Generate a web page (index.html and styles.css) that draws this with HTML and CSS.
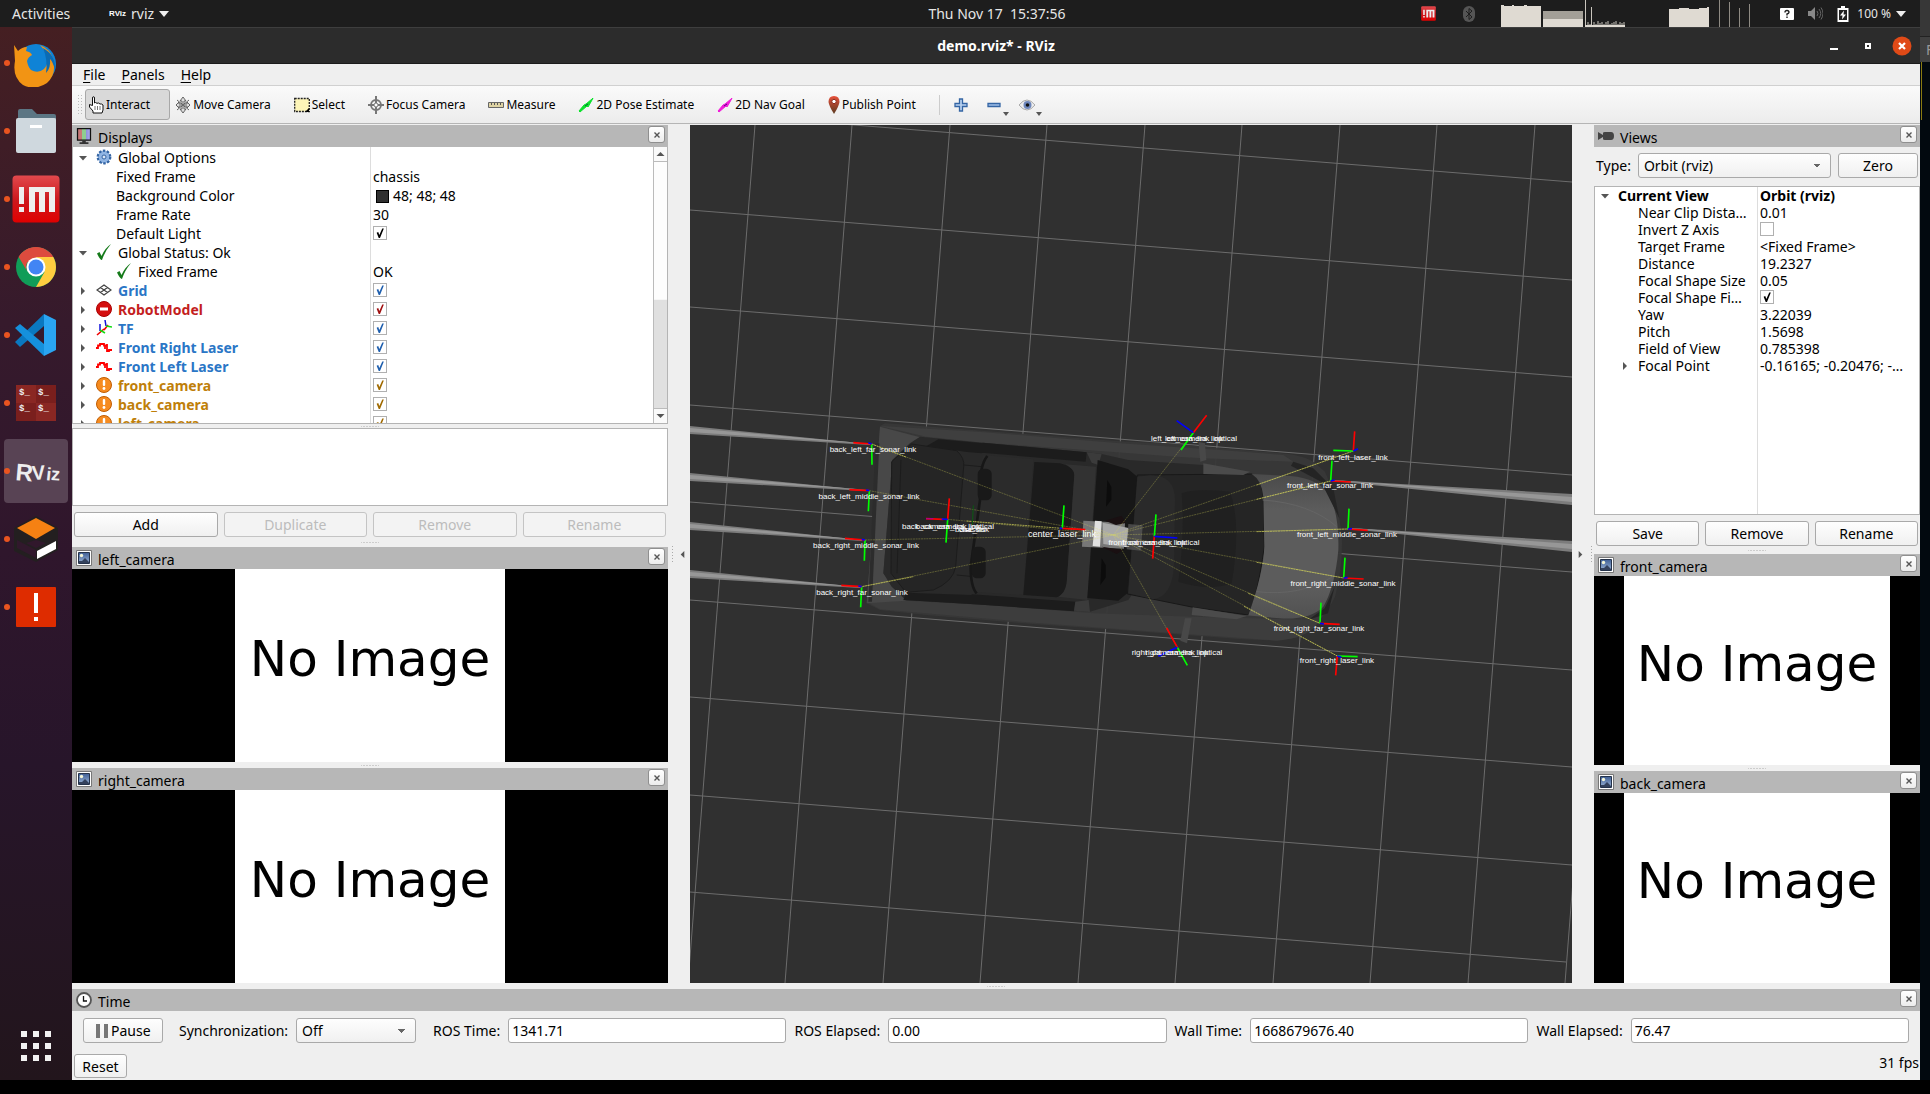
FILE: index.html
```html
<!DOCTYPE html>
<html lang="en">
<head>
<meta charset="utf-8">
<title>demo.rviz* - RViz</title>
<link rel="stylesheet" href="styles.css">
</head>
<body>
<svg class="defs" aria-hidden="true">
  <defs>
    <linearGradient id="gSky" x1="0" y1="0" x2="0" y2="1"><stop offset="0" stop-color="#3f5f95"/><stop offset="1" stop-color="#9db6d8"/></linearGradient>
    <linearGradient id="gM" x1="0" y1="0" x2="0" y2="1"><stop offset="0" stop-color="#e2494d"/><stop offset=".5" stop-color="#cc1a1f"/><stop offset="1" stop-color="#e00000"/></linearGradient>
    <linearGradient id="gMon" x1="0" y1="0" x2="1" y2="0"><stop offset="0" stop-color="#c87878"/><stop offset=".33" stop-color="#c87878"/><stop offset=".34" stop-color="#8fce8f"/><stop offset=".66" stop-color="#8fce8f"/><stop offset=".67" stop-color="#9090dc"/><stop offset="1" stop-color="#b0b0f0"/></linearGradient>
    <linearGradient id="gPin" x1="0" y1="0" x2="0" y2="1"><stop offset="0" stop-color="#e8503a"/><stop offset="1" stop-color="#5a3a20"/></linearGradient>
    <linearGradient id="gHood" x1="0" y1="0" x2="0" y2="1"><stop offset="0" stop-color="#4a4a4a"/><stop offset=".25" stop-color="#5c5c5c"/><stop offset=".8" stop-color="#5c5c5c"/><stop offset="1" stop-color="#515151"/></linearGradient>
    <symbol id="i-open" viewBox="0 0 10 10"><path d="M1 3h8L5 7.500z" fill="#555"/></symbol>
    <symbol id="i-shut" viewBox="0 0 10 10"><path d="M3 1v8l4-4z" fill="#555"/></symbol>
    <symbol id="i-tick" viewBox="0 0 16 16"><path d="M1 9.500l2.500-1.500 2 4Q9 4 15 0 9 7 6 16 4 16 1 9.500z" fill="#157a1a"/></symbol>
    <symbol id="i-gear" viewBox="0 0 16 16"><circle cx="8" cy="8" r="6.200" fill="#8fb4e3" stroke="#3465a4" stroke-width="2.400" stroke-dasharray="2.500 1.400"/><circle cx="8" cy="8" r="5.200" fill="#8fb4e3"/><circle cx="8" cy="8" r="2" fill="#dce8f7" stroke="#3465a4"/></symbol>
    <symbol id="i-grid" viewBox="0 0 16 16"><path d="M8 3l7 5-7 5-7-5zM4.500 5.500l7 5M11.500 5.500l-7 5" fill="none" stroke="#444" stroke-width="1.300"/></symbol>
    <symbol id="i-err" viewBox="0 0 16 16"><circle cx="8" cy="8" r="7.500" fill="#d40f0f" stroke="#a00" /><rect x="4" y="6.500" width="8" height="3" fill="#fff"/></symbol>
    <symbol id="i-tf" viewBox="0 0 16 16"><path d="M1 15l7-6M8 10l4-5" stroke="#e00" stroke-width="1.600"/><path d="M4 11V4M10 6L9 0" stroke="#11d" stroke-width="1.500"/><path d="M4 10l5 3M10 6l6 1" stroke="#1d1" stroke-width="1.500"/></symbol>
    <symbol id="i-laser" viewBox="0 0 16 16"><path d="M0 9h2V6.500h2V5h4v1.500h1V10M11 5v7h2v-1h3M9 6.500h2" fill="none" stroke="#f00" stroke-width="1.800"/></symbol>
    <symbol id="i-warn" viewBox="0 0 16 16"><circle cx="8" cy="8" r="7.500" fill="#f68b1f" stroke="#c05c00"/><rect x="6.800" y="3" width="2.400" height="6" rx="1" fill="#fff"/><circle cx="8" cy="11.500" r="1.400" fill="#fff"/></symbol>
    <symbol id="i-img" viewBox="0 0 16 16"><path d="M.5.5h15v15H.5z" fill="#fff" stroke="#777"/><path d="M2.500 2.500h11v11h-11z" fill="url(#gSky)" stroke="#24324a"/><circle cx="5.500" cy="5.500" r="1.700" fill="#f4f6d8"/><path d="M3 13v-2l3 0 3-3 4 4v1z" fill="#33415c"/></symbol>
    <symbol id="i-close" viewBox="0 0 8 8"><path d="M1.500 1.500l5 5M6.500 1.500l-5 5" stroke="#555" stroke-width="1.400"/></symbol>
    <symbol id="i-m" viewBox="0 0 48 48"><rect x=".5" y=".5" width="47" height="47" rx="4" fill="url(#gM)"/><path d="M7 12h5v17H7zM7 32h5v5H7zM17 12h26v25h-6V17h-4v20h-6V17h-4v20h-6z" fill="#eee"/></symbol>
  </defs>
</svg>
<div class="desktop">
  <header class="topbar">
    <div class="tb-left">
      <span class="activities">Activities</span>
      <span class="tb-logo">RViz</span>
      <span class="tb-app">rviz</span>
      <svg class="caret" viewBox="0 0 10 6"><path d="M0 0h10L5 6z" fill="#eee"/></svg>
    </div>
    <time class="clock">Thu Nov 17&nbsp; 15:37:56</time>
    <div class="tray">
      <svg width="15" height="15"><use href="#i-m"/></svg>
      <svg class="bt" width="12" height="16" viewBox="0 0 12 16"><rect width="12" height="16" rx="6" fill="#555"/><path d="M3 5l6 6-3 2.500V2.500L9 5l-6 6" fill="none" stroke="#1d1d1d"/></svg>
      <svg class="load" width="252" height="27" viewBox="0 0 252 27">
        <path d="M0 27V5h3v1h8V5h2v1h10V5h3v1h14v21z" fill="#dfdad2"/>
        <path d="M42 11h40v8H42z" fill="#a39f97"/><path d="M42 19h40v8H42z" fill="#dfdad2"/>
        <path d="M84.500 0v27M90.500 7v20M87 22v5M89 24v3M93 22v5M95 24v3M97 21v6M99 23v4M101 22v5M103 24v3M105 22v5M107 21v6M109 24v3M111 23v4M113 22v5M115 21v6M117 24v3M119 22v5M121 23v4M123 22v5" stroke="#c9c5bd"/>
        <path d="M84 25h40v2H84zM168 27V9h10V8h10v1h10V8h8V7h2v20z" fill="#dfdad2"/>
        <path d="M218.500 0v27M228.500 2v25M238.500 8v19M248.500 4v23" stroke="#8f8b84"/>
      </svg>
      <svg class="ask" width="14" height="12" viewBox="0 0 14 12"><rect width="14" height="12" rx="1" fill="#fff"/><path d="M5 4.500Q5 2.500 7 2.500T9 4.300Q9 5.500 7 6v1.500M7 8.500v1.500" fill="none" stroke="#222" stroke-width="1.400"/></svg>
      <svg width="15" height="15" viewBox="0 0 15 15"><path d="M0 5h3l4-4v13l-4-4H0z" fill="#888"/><path d="M9 5q2 2.500 0 5M11 3q3.500 4.500 0 9M13 1.500q4 6 0 12" fill="none" stroke="#666"/></svg>
      <svg width="12" height="16" viewBox="0 0 12 16"><path d="M4 0h4v2h3.500v14H.5V2H4z" fill="#fff"/><path d="M2 4h8v10H2z" fill="#222"/><path d="M7 4.500L3 9.500h2.500L5 13.500l4-5H6.500z" fill="#fff"/></svg>
      <span class="percent">100 %</span>
      <svg class="caret" viewBox="0 0 10 6"><path d="M0 0h10L5 6z" fill="#eee"/></svg>
    </div>
  </header>

  <nav class="dock" aria-label="Favorites">
    <a href="#" class="fav run"><svg viewBox="0 0 48 48"><circle cx="24" cy="25" r="20" fill="#0f83d6"/><path d="M2 6l4 6q4-4 9-4l-1 4q5 1 6 4-4 2-5 6 1 6 4 9 7 4 13-1 6-7 2-15-2-5-6-9 10 4 13 14 4 15-6 24-12 8-24 2Q0 38 3 22z" fill="#f29414"/><path d="M31 9q13 7 12 22-2-8-5-11 1 9-4 14 2-13-3-25z" fill="#0b6bb4"/></svg></a>
    <a href="#" class="fav run"><svg viewBox="0 0 48 48"><path d="M6 4q0-2 2-2h12l5 5h17q2 0 2 2v10H6z" fill="#5c7684"/><path d="M6 11h38v32q0 2-2 2H6z" fill="#7a95a2"/><path d="M4 13q0-2 2-2h36q2 0 2 2v31q0 2-2 2H6q-2 0-2-2z" fill="#cfd8de"/><path d="M18 18h12v3H18z" fill="#fff"/></svg></a>
    <a href="#" class="fav run"><svg viewBox="0 0 48 48"><use href="#i-m"/></svg></a>
    <a href="#" class="fav run"><svg viewBox="0 0 48 48"><circle cx="24" cy="24" r="20" fill="#109d58"/><path d="M24 24L6.700 14A20 20 0 0 1 41.300 14z" fill="#dd4b3e"/><path d="M24 14h17.300A20 20 0 0 1 24 44l8.500-15z" fill="#ffcd40"/><path d="M6.700 14A20 20 0 0 1 41 14H24a10 10 0 0 0-9 14z" fill="#dd4b3e"/><circle cx="24" cy="24" r="9.500" fill="#fff"/><circle cx="24" cy="24" r="7.500" fill="#4285f4"/></svg></a>
    <a href="#" class="fav run"><svg viewBox="0 0 48 48"><path d="M3 31l29-28v12L8 36z" fill="#0a78c0"/><path d="M3 17l5-4 24 20v12z" fill="#1590dc"/><path d="M32 3l12 6v30l-12 6z" fill="#2aa5f2"/></svg></a>
    <a href="#" class="fav run"><svg viewBox="0 0 48 48" class="term"><rect x="4" y="6" width="40" height="36" fill="#8a2723"/><path d="M24 6h20v18H24zM4 24h20v18H4z" fill="#7a1f1d"/><text x="7" y="16">$_</text><text x="26" y="16">$_</text><text x="7" y="32">$_</text><text x="26" y="32">$_</text></svg></a>
    <a href="#" class="fav run active"><svg viewBox="0 0 48 48" class="rvlogo"><text x="3" y="33" rotate="5 -4 6 4"><tspan class="big">R</tspan><tspan class="mid">V</tspan><tspan>iz</tspan></text></svg></a>
    <a href="#" class="fav run"><svg viewBox="0 0 48 48"><path d="M24 1L2 13v23l22 11 22-12V13z" fill="#231f20"/><path d="M24 3l19 10-19 11L5 13z" fill="#f58113"/><path d="M5 25l19 10v8L5 33zM24 25l10 3-10 5-10-5z" fill="#31182c"/><path d="M25 36l19-10v8L25 44z" fill="#fff"/></svg></a>
    <a href="#" class="fav run"><svg viewBox="0 0 48 48"><rect x="4" y="4" width="40" height="40" rx="1" fill="#de2c00"/><path d="M22 10h4v20h-4zM22 34h4v4h-4z" fill="#fff"/></svg></a>
    <a href="#" class="apps" aria-label="Show Applications"><svg viewBox="0 0 30 30"><path d="M0 0h6v6H0zM12 0h6v6h-6zM24 0h6v6h-6zM0 12h6v6H0zM12 12h6v6h-6zM24 12h6v6h-6zM0 24h6v6H0zM12 24h6v6h-6zM24 24h6v6h-6z" fill="#f2f2f2"/></svg></a>
  </nav>

  <main class="window">
    <div class="titlebar">
      <h1>demo.rviz* - RViz</h1>
      <div class="winctl">
        <button aria-label="Minimize"><svg viewBox="0 0 20 20"><path d="M6 12h8v2H6z" fill="#fff"/></svg></button>
        <button aria-label="Maximize"><svg viewBox="0 0 20 20"><path d="M8 8h4v4H8z" fill="none" stroke="#fff" stroke-width="2"/></svg></button>
        <button aria-label="Close"><svg viewBox="0 0 20 20"><circle cx="10" cy="10" r="9.500" fill="#e04a17"/><path d="M7 7l6 6M13 7l-6 6" stroke="#fff" stroke-width="2.200"/></svg></button>
      </div>
    </div>
    <nav class="menubar"><button><u>F</u>ile</button><button><u>P</u>anels</button><button><u>H</u>elp</button></nav>
    <div class="toolbar">
      <span class="grip"></span>
      <button class="tool on"><svg viewBox="0 0 16 18"><path d="M5 17v-2L1.500 11V8.500l3 1V2Q4.500.7 5.500.7T6.500 2v5l1-.5 1.500.8 1.500-.3 1.500 1 1.500 0 1.500 1v5l-1 3z" fill="#fff" stroke="#111"/><path d="M7 10v4M9.500 10v4M12 10v4" stroke="#777"/></svg>Interact</button>
      <button class="tool"><svg viewBox="0 0 16 18"><path d="M8 1l3 4H9v3h3V6l3 3-3 3v-2H9v3h2l-3 4-3-4h2v-3H4v2L1 9l3-3v2h3V5H5zM2 4l12 10M14 4L2 14" fill="#ddd" stroke="#555" stroke-width=".9"/></svg>Move Camera</button>
      <button class="tool"><svg viewBox="0 0 16 18"><path d="M.7 2.500h14.600v13H.7z" fill="#fdf5b8" stroke="#222" stroke-width="1.300" stroke-dasharray="2 1"/><path d="M15 12v4h-4z" fill="#000"/></svg>Select</button>
      <button class="tool"><svg viewBox="0 0 16 18"><circle cx="8" cy="9" r="5" fill="none" stroke="#777" stroke-width="1.800"/><path d="M8 0v7M8 11v7M0 9h6M10 9h6" stroke="#777" stroke-width="2"/><circle cx="8" cy="9" r="2" fill="#fff" stroke="#777"/></svg>Focus Camera</button>
      <button class="tool"><svg viewBox="0 0 16 18"><path d="M.5 6.500h15v5H.5z" fill="#ded3a4" stroke="#666"/><path d="M3.500 7v2M6.500 7v2M9.500 7v2M12.500 7v2" stroke="#555"/></svg>Measure</button>
      <button class="tool"><svg viewBox="0 0 16 18"><path d="M1 15l5-6 2-1L14 3l1-1-1 2-4 7-1-1-7 6z" fill="#0de02e" stroke="#0be32a"/><path d="M7 10l3-2" stroke="#063"/></svg>2D Pose Estimate</button>
      <button class="tool"><svg viewBox="0 0 16 18"><path d="M1 15l5-6 2-1L14 3l1-1-1 2-4 7-1-1-7 6z" fill="#f01cd8" stroke="#f01cd8"/><path d="M7 10l3-2" stroke="#508"/></svg>2D Nav Goal</button>
      <button class="tool pin"><svg viewBox="0 0 12 18"><path d="M6 0q5.500 0 5.500 6Q11 10 6 18 1 10 .5 6 .5 0 6 0z" fill="url(#gPin)"/><circle cx="6" cy="5.500" r="2.200" fill="#fff" stroke="#8c2a1c"/></svg>Publish Point</button>
      <span class="sep"></span>
      <button class="tool bare" aria-label="Add tool"><svg viewBox="0 0 16 18"><path d="M6.500 3h3v4.500H14v3H9.500V15h-3v-4.500H2v-3h4.500z" fill="#b9d2f0" stroke="#3465a4" stroke-width="1.300"/></svg></button>
      <button class="tool bare" aria-label="Remove tool"><svg viewBox="0 0 16 18"><path d="M2 7.500h12v3H2z" fill="#9fbfe8" stroke="#3465a4" stroke-width="1.300"/></svg><i class="drop"></i></button>
      <button class="tool bare" aria-label="Visibility"><svg viewBox="0 0 16 18"><path d="M0 9q8-10 16 0-8 10-16 0z" fill="#eee" stroke="#aaa"/><circle cx="8.500" cy="9" r="4" fill="#6d86bb"/><circle cx="8.500" cy="9" r="1.800" fill="#111"/></svg><i class="drop"></i></button>
    </div>

    <div class="workspace">
      <div class="col-left">
        <section class="panel displays">
          <h2 class="ptitle"><svg viewBox="0 0 16 18"><path d="M.7.7h14.600v13H.7z" fill="url(#gMon)" stroke="#111" stroke-width="1.400"/><path d="M6 14h4v2h3v2H3v-2h3z" fill="#333"/></svg><span>Displays</span><button class="x" aria-label="Close"><svg><use href="#i-close"/></svg></button></h2>
          <div class="tree">
            <div class="tscroll">
            <table class="props">
              <tr><td class="l0"><svg class="ar"><use href="#i-open"/></svg><svg class="ic"><use href="#i-gear"/></svg>Global Options</td><td></td></tr>
              <tr><td class="l1">Fixed Frame</td><td>chassis</td></tr>
              <tr><td class="l1">Background Color</td><td><i class="swatch"></i>48; 48; 48</td></tr>
              <tr><td class="l1">Frame Rate</td><td>30</td></tr>
              <tr><td class="l1"><label for="c0">Default Light</label></td><td><input type="checkbox" id="c0" checked></td></tr>
              <tr><td class="l0"><svg class="ar"><use href="#i-open"/></svg><svg class="ic"><use href="#i-tick"/></svg>Global Status: Ok</td><td></td></tr>
              <tr><td class="l1"><svg class="ic"><use href="#i-tick"/></svg>Fixed Frame</td><td>OK</td></tr>
              <tr class="blue"><td class="l0"><svg class="ar"><use href="#i-shut"/></svg><svg class="ic"><use href="#i-grid"/></svg><label for="c1">Grid</label></td><td><input type="checkbox" id="c1" checked></td></tr>
              <tr class="red"><td class="l0"><svg class="ar"><use href="#i-shut"/></svg><svg class="ic"><use href="#i-err"/></svg><label for="c2">RobotModel</label></td><td><input type="checkbox" id="c2" checked></td></tr>
              <tr class="blue"><td class="l0"><svg class="ar"><use href="#i-shut"/></svg><svg class="ic"><use href="#i-tf"/></svg><label for="c3">TF</label></td><td><input type="checkbox" id="c3" checked></td></tr>
              <tr class="blue"><td class="l0"><svg class="ar"><use href="#i-shut"/></svg><svg class="ic"><use href="#i-laser"/></svg><label for="c4">Front Right Laser</label></td><td><input type="checkbox" id="c4" checked></td></tr>
              <tr class="blue"><td class="l0"><svg class="ar"><use href="#i-shut"/></svg><svg class="ic"><use href="#i-laser"/></svg><label for="c5">Front Left Laser</label></td><td><input type="checkbox" id="c5" checked></td></tr>
              <tr class="gold"><td class="l0"><svg class="ar"><use href="#i-shut"/></svg><svg class="ic"><use href="#i-warn"/></svg><label for="c6">front_camera</label></td><td><input type="checkbox" id="c6" checked></td></tr>
              <tr class="gold"><td class="l0"><svg class="ar"><use href="#i-shut"/></svg><svg class="ic"><use href="#i-warn"/></svg><label for="c7">back_camera</label></td><td><input type="checkbox" id="c7" checked></td></tr>
              <tr class="gold"><td class="l0"><svg class="ar"><use href="#i-shut"/></svg><svg class="ic"><use href="#i-warn"/></svg><label for="c8">left_camera</label></td><td><input type="checkbox" id="c8" checked></td></tr>
            </table>
            </div>
            <div class="vbar"><svg viewBox="0 0 10 10"><path d="M1 7h8L5 3z" fill="#555"/></svg><i></i><svg viewBox="0 0 10 10"><path d="M1 3h8L5 7z" fill="#555"/></svg></div>
          </div>
          <div class="split thin"></div>
          <div class="desc"></div>
          <div class="btnrow"><button>Add</button><button disabled>Duplicate</button><button disabled>Remove</button><button disabled>Rename</button></div>
          <div class="split tall"></div>
        </section>
        <section class="panel cam">
          <h2 class="ptitle"><svg viewBox="0 0 16 16"><use href="#i-img"/></svg><span>left_camera</span><button class="x" aria-label="Close"><svg><use href="#i-close"/></svg></button></h2>
          <div class="feed"><div class="noimg">No Image</div></div>
        </section>
        <div class="split"></div>
        <section class="panel cam">
          <h2 class="ptitle"><svg viewBox="0 0 16 16"><use href="#i-img"/></svg><span>right_camera</span><button class="x" aria-label="Close"><svg><use href="#i-close"/></svg></button></h2>
          <div class="feed"><div class="noimg">No Image</div></div>
        </section>
      </div>

      <div class="gutter"><i class="vdots"></i><svg viewBox="0 0 10 10"><path d="M7 1v8L3 5z" fill="#555"/></svg></div>

      <svg class="scene" viewBox="690 125 882 858" preserveAspectRatio="xMidYMid slice" role="img" aria-label="Orbit view">
        <path class="gridlines" d="M755 125l-67 858M852 125l-67 858M950 125l-67 858M1047 125l-67 858M1145 125l-67 858M1242 125l-67 858M1340 125l-67 858M1437 125l-67 858M1535 125l-67 858M1632 125l-67 858M690 112l882 70M690 210l882 70M690 307l882 70M690 405l882 70M690 502l882 70M690 600l882 70M690 697l882 70M690 795l882 70M690 892l876 70"/>
        <path fill="#7c7c7c" d="M690 426v8l180 11v-1zM690 473v8l175 10v-1zM690 522v8l172 11v-1zM690 570v8l170 10v-1zM1332 480l240 14v11l-240-24zM1350 528l222 13v11l-222-23z"/>
        <path fill="#979797" d="M690 428v4l182 12zM690 475v4l179 11zM690 524v4l175 12zM690 572v4l171 11zM1332 480l240 17v5zM1350 528l222 16v5z"/>
        <g transform="translate(800 400) scale(.33333)">
          <path d="M240 78L255 70 545 92 960 124 1130 132 1260 145 1400 156Q1500 160 1540 185L1575 215Q1612 300 1625 400 1630 500 1605 590 1570 665 1500 708 1460 726 1330 718L960 690 700 672 380 645 240 630 200 610z" fill="#383838" fill-opacity=".95"/>
          <path d="M240 78L545 96 960 130 1260 150 1450 165 1480 185 1210 175 1130 170 890 152 550 128 380 110z" fill="#3f3f3f"/>
          <path d="M200 605L320 602 560 615 880 640 1180 650 1560 660Q1530 715 1430 722L1200 705 700 668 240 628z" fill="#3d3d3d"/>
          <path d="M240 80L360 112 325 135 277 180 250 520 318 602 200 610z" fill="#484848"/>
          <path d="M226 130L205 605 216 605 238 130z" fill="#2c2c2c"/>
          <path d="M360 110L548 128 860 157 905 162 985 180 1210 195 1240 215 985 600 870 635 512 612 318 600 275 560 250 520 277 180 330 130z" fill="#292929"/>
          <path d="M275 185L335 132 470 152Q495 175 491 200L467 500Q460 545 400 570L318 577 273 520z" fill="#252525" stroke="#1c1c1c" stroke-width="3"/>
          <path d="M303 180L291 520M492 195L545 200M470 525L520 530" stroke="#1c1c1c" stroke-width="3" fill="none"/>
          <path d="M380 138L415 118 548 130 545 160 500 156zM548 128L860 157 857 185 545 158zM318 578L515 585 512 612 310 600zM515 583L826 605 822 634 512 612z" fill="#1c1c1c"/>
          <path d="M548 165L700 178 670 585 520 575 512 500 530 400z" fill="#2b2b2b"/>
          <path d="M562 168Q535 200 540 300L512 500Q512 560 530 580" stroke="#171717" stroke-width="8" fill="none"/>
          <rect x="533" y="206" width="42" height="95" rx="16" fill="#191919"/><rect x="515" y="440" width="42" height="95" rx="16" fill="#191919"/>
          <path d="M703 186L780 190Q822 200 823 225L800 550Q795 585 770 592L670 585z" fill="#1b1b1b"/>
          <path d="M795 193L888 200 862 600 775 590Q795 580 800 550L823 225Q822 205 795 193z" fill="#323232"/>
          <path d="M860 157L905 162 895 195 875 188zM826 605L866 600 870 636 822 632z" fill="#3b3b3b"/>
          <path d="M893 180L985 208 1012 230 982 580 955 602 862 594z" fill="#171717"/>
          <path d="M922 240l12 20v40l-16 20zM905 475l12 20v38l-16 22z" fill="#0c0c0c"/>
          <path d="M1012 225L1355 222Q1385 230 1390 290L1393 440Q1370 600 1345 645L1180 622 982 582z" fill="#252525" stroke="#181818" stroke-width="3"/>
          <path d="M1050 226Q1125 225 1125 300L1122 500Q1115 590 1060 598L985 580 1012 230z" fill="#2a2a2a"/>
          <path d="M1145 280Q1180 265 1290 275 1325 370 1295 550 1230 575 1135 545 1155 400 1145 280z" fill="#202020"/>
          <path d="M1355 222L1470 228Q1560 235 1590 290 1618 350 1615 450 1605 560 1570 620 1530 660 1440 655L1330 645 1345 645Q1390 520 1393 440L1390 290Q1385 240 1355 222z" fill="url(#gHood)"/>
          <path d="M1388 300Q1530 310 1610 380M1370 575Q1500 590 1598 530" stroke="#646464" stroke-width="3" fill="none"/>
          <path d="M1210 190L1350 215 1330 225 1210 222zM1178 622L1340 648 1310 658 1175 645z" fill="#4b4b4b"/>
          <path d="M1195 125l20 5 4 50-18 5zM1155 655l20 0-14 75-20-8z" fill="#484848"/>
          <path d="M1480 185l60 20 60 60 18 90-20-40-35-70-90-48zM1604 560l-20 80-60 20 50-35z" fill="#242424"/>
          <path d="M850 362L975 368 972 446 846 440z" fill="#777"/><path d="M885 362L905 364 900 440 878 438z" fill="#e0e0e0"/>
          <path d="M908 368l78 16-6 58-70-10z" fill="#a9a9a9"/><path d="M985 372l43 4-5 76-43-4z" fill="#555" fill-opacity=".8"/><path d="M915 362l50-15 13 22-30 6zM905 440l45 22 20-12z" fill="#1a1012"/>
        </g>
        <g transform="translate(800 400) scale(.33333)">
          <path class="tf dim" d="M215 132L940 405M208 272L940 405M195 420L940 405M185 560L940 405M443 358L940 405M1180 98L940 405M1132 742L940 405M1660 153L940 405M1592 243L940 405M1644 387L940 405M1631 534L940 405M1560 670L940 405M1612 768L940 405"/>
          <path class="tf" d="M1370 255L1660 153M1370 298L1592 243M1370 395L1644 387M1370 487L1631 534M1345 580L1560 670M1332 619L1612 768M180 561L340 530M215 132L320 172M500 363L850 390"/>
          <path class="ax g" d="M215 132l1 62M208 272l-3 62M195 420l-2 62M185 560l-3 62M443 358l-5 70M787 385l5-69M1063 409l5-66M1180 98l-37 52M1660 153l-60-2M1592 243l4-61M1644 387l3-61M1631 534l4-61M1560 670l3-62M1612 768l61 2M1132 742l30 54"/>
          <path class="ax r" d="M215 132l-55-4M208 272l-60-3M195 420l-60-5M185 560l-61-4M443 358l5-63M430 358l-52-2M787 385l69 4M1063 409l-5 67M1180 98l40-52M1660 153l4-59M1592 243l61 3M1644 387l59 4M1631 534l60 3M1560 670l59 3M1612 768l-5 58M1132 742l-32-58"/>
          <path class="ax b" d="M215 132l-10-4M208 272l-10-2M195 420l-10-2M185 560l-10-2M443 358l-18-1M787 385l-8 0M1063 409l69 5M1180 98l-50-36M1660 153l14-7M1592 243l12-3M1644 387l12-1M1631 534l12-1M1560 670l12 2M1612 768l12 4M1132 742l-57 27"/>
          <path d="M520 316l-3 60" stroke="#0a5a12" stroke-width="3"/><path d="M400 356l-22 0" stroke="#b00080" stroke-width="4"/>
        </g>
        <g class="frames">
          <text x="873" y="452">back_left_far_sonar_link</text><text x="869" y="499">back_left_middle_sonar_link</text><text x="866" y="548">back_right_middle_sonar_link</text><text x="862" y="595">back_right_far_sonar_link</text>
          <text x="948" y="529">back_camera_link_optical</text><text x="948" y="529">back_camera_link</text><text x="972" y="532">base_link</text><text x="972" y="532">chassis</text>
          <text class="near" x="1062" y="537">center_laser_link</text>
          <text x="1154" y="545">front_camera_link_optical</text><text x="1154" y="545">front_camera_link</text>
          <text x="1194" y="441">left_camera_link_optical</text><text x="1194" y="441">left_camera_link</text>
          <text x="1177" y="655">right_camera_link_optical</text><text x="1177" y="655">right_camera_link</text>
          <text x="1353" y="460">front_left_laser_link</text><text x="1330" y="488">front_left_far_sonar_link</text><text x="1347" y="537">front_left_middle_sonar_link</text><text x="1343" y="586">front_right_middle_sonar_link</text><text x="1319" y="631">front_right_far_sonar_link</text><text x="1337" y="663">front_right_laser_link</text>
        </g>
      </svg>

      <div class="gutter right"><svg viewBox="0 0 10 10"><path d="M3 1v8l4-4z" fill="#555"/></svg><i class="vdots"></i></div>

      <div class="col-right">
        <section class="panel views">
          <h2 class="ptitle"><svg viewBox="0 0 16 16"><path d="M0 4l5 3V5q0-1 2-1h6q3 0 3 4t-3 4H7q-2 0-2-1V9l-5 3z" fill="#444"/></svg><span>Views</span><button class="x" aria-label="Close"><svg><use href="#i-close"/></svg></button></h2>
          <div class="typerow"><label for="vt">Type:</label><select id="vt"><option>Orbit (rviz)</option></select><button>Zero</button></div>
          <div class="tree">
            <table class="props">
              <tr class="b"><td class="l0"><svg class="ar"><use href="#i-open"/></svg>Current View</td><td>Orbit (rviz)</td></tr>
              <tr><td class="l1">Near Clip Dista…</td><td>0.01</td></tr>
              <tr><td class="l1"><label for="v1">Invert Z Axis</label></td><td><input type="checkbox" id="v1"></td></tr>
              <tr><td class="l1">Target Frame</td><td>&lt;Fixed Frame&gt;</td></tr>
              <tr><td class="l1">Distance</td><td>19.2327</td></tr>
              <tr><td class="l1">Focal Shape Size</td><td>0.05</td></tr>
              <tr><td class="l1"><label for="v2">Focal Shape Fi…</label></td><td><input type="checkbox" id="v2" checked></td></tr>
              <tr><td class="l1">Yaw</td><td>3.22039</td></tr>
              <tr><td class="l1">Pitch</td><td>1.5698</td></tr>
              <tr><td class="l1">Field of View</td><td>0.785398</td></tr>
              <tr><td class="l2"><svg class="ar"><use href="#i-shut"/></svg>Focal Point</td><td>-0.16165; -0.20476; -…</td></tr>
            </table>
          </div>
          <div class="btnrow"><button>Save</button><button>Remove</button><button>Rename</button></div>
          <div class="split tall"></div>
        </section>
        <section class="panel cam">
          <h2 class="ptitle"><svg viewBox="0 0 16 16"><use href="#i-img"/></svg><span>front_camera</span><button class="x" aria-label="Close"><svg><use href="#i-close"/></svg></button></h2>
          <div class="feed"><div class="noimg">No Image</div></div>
        </section>
        <div class="split"></div>
        <section class="panel cam">
          <h2 class="ptitle"><svg viewBox="0 0 16 16"><use href="#i-img"/></svg><span>back_camera</span><button class="x" aria-label="Close"><svg><use href="#i-close"/></svg></button></h2>
          <div class="feed"><div class="noimg">No Image</div></div>
        </section>
      </div>
    </div>

    <div class="split center"></div>
    <section class="timepanel">
      <h2 class="ptitle"><svg viewBox="0 0 16 16"><circle cx="8" cy="8" r="7" fill="#fff" stroke="#555" stroke-width="1.800"/><path d="M7.500 4v5H11" fill="none" stroke="#111" stroke-width="1.300"/></svg><span>Time</span><button class="x" aria-label="Close"><svg><use href="#i-close"/></svg></button></h2>
      <div class="timerow">
        <button class="pause"><svg viewBox="0 0 14 14"><path d="M1 0h4v14H1zM9 0h4v14H9z" fill="#777"/></svg>Pause</button>
        <label class="sync" for="sy">Synchronization:</label><select id="sy"><option>Off</option></select>
        <label class="ros" for="rt">ROS Time:</label><input id="rt" value="1341.71">
        <label for="re">ROS Elapsed:</label><input id="re" value="0.00">
        <label for="wt">Wall Time:</label><input id="wt" value="1668679676.40">
        <label for="we">Wall Elapsed:</label><input id="we" value="76.47">
      </div>
      <div class="status"><button>Reset</button><output>31 fps</output></div>
    </section>
  </main>
  <aside class="behind"><div class="b1"></div><div class="b2">F</div><div class="b3"></div></aside>
</div>
</body>
</html>
```
FILE: styles.css
```css
* { box-sizing: border-box; }
body { margin: 0; background: #000; font: 14px/19px "Noto Sans", "Open Sans", sans-serif; color: #000; }
button, input, select { font: inherit; color: inherit; margin: 0; }
h1, h2 { margin: 0; font: inherit; }
.defs { position: absolute; width: 0; height: 0; }
svg { display: block; flex: none; }

.desktop { display: grid; grid-template: 27px minmax(0, 1fr) / 72px minmax(0, 1fr) 10px; height: 100vh; min-height: 900px; padding-bottom: 14px; background: #000; }

/* top bar */
.topbar { grid-area: 1 / 1 / 2 / 3; display: grid; grid-template-columns: 74px 1fr auto 1fr; align-items: center; background: #1d1d1d; color: #e6e6e6; }
.tb-left { grid-column: 1 / 3; grid-row: 1; display: flex; align-items: center; padding-left: 12px; }
.activities { width: 97px; }
.tb-logo { width: 22px; font: bold 8px "Liberation Sans", sans-serif; color: #fff; }
.tb-app { margin-right: 5px; }
.caret { width: 10px; height: 6px; }
.clock { grid-column: 3; grid-row: 1; }
.tray { grid-column: 4; grid-row: 1; min-width: 0; display: flex; align-items: center; justify-content: flex-end; gap: 14px; height: 27px; padding-right: 14px; }
.bt { margin-left: 13px; }
.load { margin: 0 13px 0 12px; }
.percent { margin: 0 -9px 0 -6px; font-size: 12px; white-space: nowrap; }

/* favourites dock */
.dock { grid-area: 2 / 1; display: flex; flex-direction: column; gap: 4px; padding: 4px; background: linear-gradient(#451f22, #361a2c 28%, #2f162c 50%, #27152a 70%, #22151c); }
.fav { position: relative; display: grid; place-items: center; height: 64px; border-radius: 4px; text-decoration: none; }
.fav svg { width: 48px; height: 48px; }
.fav.run::before { content: ""; position: absolute; left: 0; top: 29px; width: 6px; height: 6px; border-radius: 3px; background: #e95420; }
.fav.active { background: #584354; }
.term text { font: bold 9px "Liberation Mono", monospace; fill: #eee; }
.rvlogo text { font: bold 18px "Liberation Sans", sans-serif; fill: #eee; }
.rvlogo .big { font-size: 24px; }
.rvlogo .mid { font-size: 20px; }
.apps { margin: auto auto 15px; }
.apps svg { width: 30px; height: 30px; }

/* window */
.window { grid-area: 2 / 2; display: flex; flex-direction: column; min-width: 0; background: #efefef; }
.titlebar { display: grid; grid-template-columns: 1fr auto 1fr; align-items: center; height: 37px; background: #2c2c2c; border-top: 1px solid #3e3e3e; border-bottom: 1px solid #1c1c1c; color: #fff; }
.titlebar h1 { grid-column: 2; font-weight: bold; font-size: 14px; }
.winctl { display: flex; justify-content: flex-end; gap: 14px; padding-right: 8px; }
.winctl button { width: 20px; height: 20px; padding: 0; border: 0; background: none; }
.menubar { display: flex; gap: 16px; height: 22px; padding: 1px 11px; border-bottom: 1px solid #d0d0d0; }
.menubar button { padding: 0; border: 0; background: none; line-height: 19px; }
.menubar u { text-underline-offset: 2px; }
.toolbar { display: flex; align-items: center; height: 38px; padding-left: 5px; background: linear-gradient(#fafafa, #ececec); border-bottom: 1px solid #b5b5b5; font-size: 12px; }
.grip { width: 5px; height: 21px; margin-right: 3px; background: radial-gradient(#bbb 1px, transparent 1px) 0 0 / 3px 3px; }
.tool { display: flex; align-items: center; gap: 2px; height: 31px; margin-right: 2px; padding: 1px 17px 0 2px; border: 1px solid transparent; border-radius: 3px; background: none; line-height: 16px; white-space: nowrap; }
.tool svg { width: 16px; height: 18px; }
.tool.pin svg { width: 12px; }
.tool.on { padding-right: 19px; background: #d9d9d9; border-color: #a8a8a8; }
.sep { width: 1px; height: 20px; margin: 0 8px 0 3px; background: #ccc; }
.tool.bare { position: relative; padding: 0 8px 0 4px; margin-right: 3px; }
.drop { position: absolute; right: 1px; bottom: 3px; border: 3px solid transparent; border-top: 4px solid #555; border-bottom: 0; }

.workspace { flex: 1; min-height: 0; padding-top: 1px; display: grid; grid-template: minmax(0, 1fr) / minmax(0, 596fr) 22px minmax(0, 882fr) 22px minmax(0, 326fr); }
.col-left { display: grid; grid-template-rows: minmax(0, 422fr) minmax(0, 215fr) 6px minmax(0, 215fr); min-width: 0; }
.col-right { display: grid; grid-template-rows: minmax(0, 429fr) minmax(0, 211fr) 6px minmax(0, 212fr); min-width: 0; }
.panel { display: flex; flex-direction: column; min-width: 0; min-height: 0; }
.ptitle { flex: none; display: flex; align-items: center; height: 22px; padding: 0 3px 0 4px; background: #b7b7b7; line-height: 21px; }
.ptitle > svg { width: 16px; height: 16px; margin-right: 6px; }
.ptitle > span { flex: 1; padding-top: 2px; }
.x { display: grid; place-items: center; width: 17px; height: 17px; padding: 0; margin-bottom: 3px; border: 1px solid #8f8f8f; border-radius: 3px; background: linear-gradient(#fff, #ececec); }
.x svg { width: 8px; height: 8px; }

.tree { flex: 1; min-height: 0; display: flex; overflow: hidden; background: #fff; border: 1px solid #b4b4b4; border-width: 0 1px 1px; }
.tscroll { flex: 1; min-width: 0; overflow: hidden; padding-top: 1px; background: linear-gradient(#ddd, #ddd) 297px 0 / 1px 100% no-repeat; }
.props { width: 100%; table-layout: fixed; border-collapse: collapse; }
.props td { height: 19px; padding: 0 0 0 3px; white-space: nowrap; line-height: 19px; overflow: hidden; }
.props td:first-child { width: 297px; }
.props td > svg, .props td > input, .props td > .swatch { display: inline-block; vertical-align: middle; }
.props .l0 { padding-left: 5px; }
.props .l1 { padding-left: 43px; }
.ar { width: 10px; height: 10px; margin-top: -3px; margin-right: 8px; }
.ic { width: 16px; height: 16px; margin-top: -4px; margin-right: 6px; }
.swatch { width: 13px; height: 13px; margin: -2px 4px 0 3px; background: #303030; border: 1px solid #000; }
input[type=checkbox] { appearance: none; position: relative; width: 14px; height: 14px; margin-top: -4px; border: 1px solid #b0b0b0; background: #fff; color: #000; }
input[type=checkbox]:checked::before { content: ""; position: absolute; inset: 1px 2px; background: currentColor; clip-path: polygon(8% 45%, 28% 38%, 42% 68%, 78% 2%, 98% 2%, 50% 98%, 34% 98%); }
.blue td:first-child, .red td:first-child, .gold td:first-child, .b td { font-weight: bold; }
.blue { color: #2a76c6; } .red { color: #c41e1e; } .gold { color: #bf7f0a; }
.blue input[type=checkbox] { color: #1f5fae; }
.red input[type=checkbox] { color: #a01010; }
.gold input[type=checkbox] { color: #a06a00; }
.vbar { width: 14px; display: flex; flex-direction: column; border-left: 1px solid #bbb; background: #e0e0e0; }
.vbar svg { width: 13px; height: 14px; padding: 2px 1px; background: #fafafa; }
.vbar i { flex: 1; background: linear-gradient(#fdfdfd, #fdfdfd) 0 0 / 100% 56% no-repeat; border: 1px solid #bbb; border-width: 1px 0; }
.split { flex: none; height: 6px; padding: 0 calc(50% - 9px); background: radial-gradient(#aaa 1px, transparent 1px) center / 3px 3px repeat-x content-box; }
.split.thin { height: 4px; }
.split.tall { height: 10px; }
.views .split.tall { height: 8px; }
.desc { flex: none; height: 78px; background: #fff; border: 1px solid #b4b4b4; }
.btnrow { flex: none; display: flex; gap: 6px; padding: 6px 2px 0; }
.btnrow button, .typerow button, .timerow button, .status button { height: 25px; border: 1px solid #a9a9a9; border-radius: 3px; background: linear-gradient(#fefefe, #f0f0f0); line-height: 19px; }
.btnrow button { flex: 1; min-width: 0; }
.btnrow button:disabled { color: #bcbcbc; border-color: #c4c4c4; background: #f3f3f3; }
.feed { flex: 1; min-height: 0; display: flex; justify-content: center; background: #000; }
.noimg { display: grid; place-items: center; width: 270px; padding-bottom: 14px; background: #fff; font: 50px/56px "DejaVu Sans", sans-serif; white-space: nowrap; }
.col-right .noimg { width: 266px; }

.gutter { display: flex; align-items: center; justify-content: space-between; padding: 0 3px; }
.gutter svg { width: 9px; height: 9px; }
.gutter.right { padding: 0 2px 0 4px; }
.vdots { width: 2px; height: 18px; background: radial-gradient(#aaa 1px, transparent 1px) 0 0 / 3px 3px; }

.scene { width: 100%; height: 100%; background: #303030; }
.gridlines { fill: none; stroke: #6c6c6c; stroke-width: 1; }
.tf { fill: none; stroke: #dede5a; stroke-width: 2; stroke-dasharray: 6 2; }
.tf.dim { opacity: .45; }
.ax { fill: none; stroke-width: 5; }
.g { stroke: #0f0; } .r { stroke: #f00; } .ax.b { stroke: #00f; }
.frames text { font: 8px "Liberation Sans", Arial, sans-serif; fill: #fff; text-anchor: middle; }
.frames .near { font-size: 9px; }

.typerow { flex: none; display: flex; align-items: center; gap: 7px; padding: 6px 2px 8px; }
select { appearance: none; height: 25px; padding: 0 5px; border: 1px solid #a9a9a9; border-radius: 3px; background: linear-gradient(45deg, transparent 50%, #666 50%) right 13px center / 4px 4px no-repeat, linear-gradient(-45deg, transparent 50%, #666 50%) right 9px center / 4px 4px no-repeat, linear-gradient(#fefefe, #f0f0f0); }
.typerow select { flex: 1; min-width: 0; }
.typerow button { width: 80px; }
.views .tree { border-top-width: 1px; background: linear-gradient(#ddd, #ddd) 162px 0 / 1px 100% no-repeat, #fff; }
.views .props { height: 0; }
.views .props td { height: 17px; line-height: 17px; }
.views .props td:first-child { width: 162px; }
.views .props .l0 { padding-left: 5px; }
.views .props .l1 { padding-left: 43px; }
.views .props .l2 { padding-left: 25px; }

.timerow { display: flex; align-items: center; gap: 8px; padding: 7px 11px 0; white-space: nowrap; }
.pause { display: flex; align-items: center; gap: 2px; width: 80px; padding: 0 11px; }
.pause svg { width: 14px; height: 14px; }
.sync { margin-left: 8px; }
.ros { margin-left: 9px; }
.timerow select { width: 120px; }
.timerow input { flex: 1; min-width: 0; height: 25px; padding: 0 3px; border: 1px solid #a9a9a9; border-radius: 3px; background: #fff; }
.status { display: flex; align-items: center; justify-content: space-between; padding: 11px 1px 2px 2px; }
.status button { height: 24px; width: 53px; padding: 0; }
.status output { margin-top: -8px; white-space: nowrap; }

/* sliver of the window underneath */
.behind { grid-area: 1 / 3 / 3 / 4; display: flex; flex-direction: column; background: #02090f; overflow: hidden; }
.b1 { height: 37px; background: #373737; border-bottom: 1px solid #222; }
.b2 { height: 25px; padding-left: 6px; line-height: 25px; background: #404040; color: #999; }
.b3 { height: 58px; margin-left: 1px; border-left: 1px solid #8a7a10; }
```
